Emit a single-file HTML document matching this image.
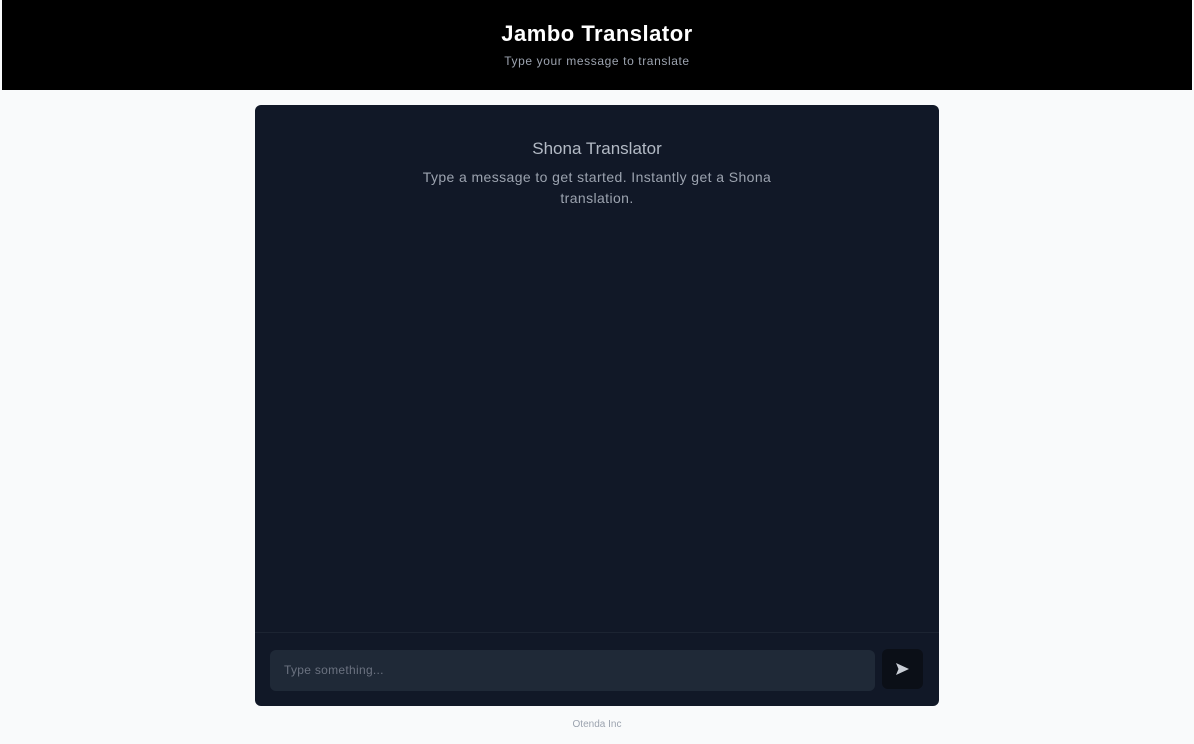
<!DOCTYPE html>
<html><head><meta charset="utf-8"><style>
*{margin:0;padding:0;box-sizing:border-box}
body{width:1194px;height:744px;background:#f9fafb;font-family:"Liberation Sans",Arial,sans-serif;position:relative;overflow:hidden}
.hdr{position:absolute;left:2px;right:2px;top:0;height:90px;background:#000;text-align:center;color:#fff}
.hdr h1{position:absolute;top:21px;width:100%;font-size:22px;font-weight:bold;letter-spacing:0.5px}
.hdr p{position:absolute;top:54px;width:100%;font-size:12px;letter-spacing:0.6px;color:#9ca3af}
.card{position:absolute;left:255px;top:105px;width:684px;height:601px;background:#111827;border-radius:6px}
.t1{position:absolute;top:34px;width:100%;text-align:center;color:#b3bac5;font-size:17px}
.t2{position:absolute;top:62px;left:147px;width:390px;text-align:center;color:#9ca3af;font-size:14px;letter-spacing:0.4px;line-height:21px}
.div{position:absolute;left:0;right:0;top:527px;height:1px;background:#1c2432}
.inp{position:absolute;left:15px;top:545px;width:605px;height:41px;background:#1f2937;border-radius:6px;color:#6b7280;font-size:12px;letter-spacing:0.3px;padding:13px 0 0 14px}
.btn{position:absolute;left:627px;top:544px;width:41px;height:40px;background:#0b0f17;border-radius:6px}
.btn svg{position:absolute;left:13px;top:13px}
.ft{position:absolute;top:719px;width:100%;text-align:center;font-size:10px;color:#9ca3af}
</style></head><body>
<div class="hdr"><h1>Jambo Translator</h1><p>Type your message to translate</p></div>
<div class="card">
<div class="t1">Shona Translator</div>
<div class="t2">Type a message to get started. Instantly get a Shona translation.</div>
<div class="div"></div>
<div class="inp">Type something...</div>
<div class="btn"><svg width="15" height="14" viewBox="0 0 15 14"><path d="M1 1 L14 7 L1 13 L3.5 7 Z" fill="#c9ced6"/></svg></div>
</div>
<div class="ft">Otenda Inc</div>
</body></html>
